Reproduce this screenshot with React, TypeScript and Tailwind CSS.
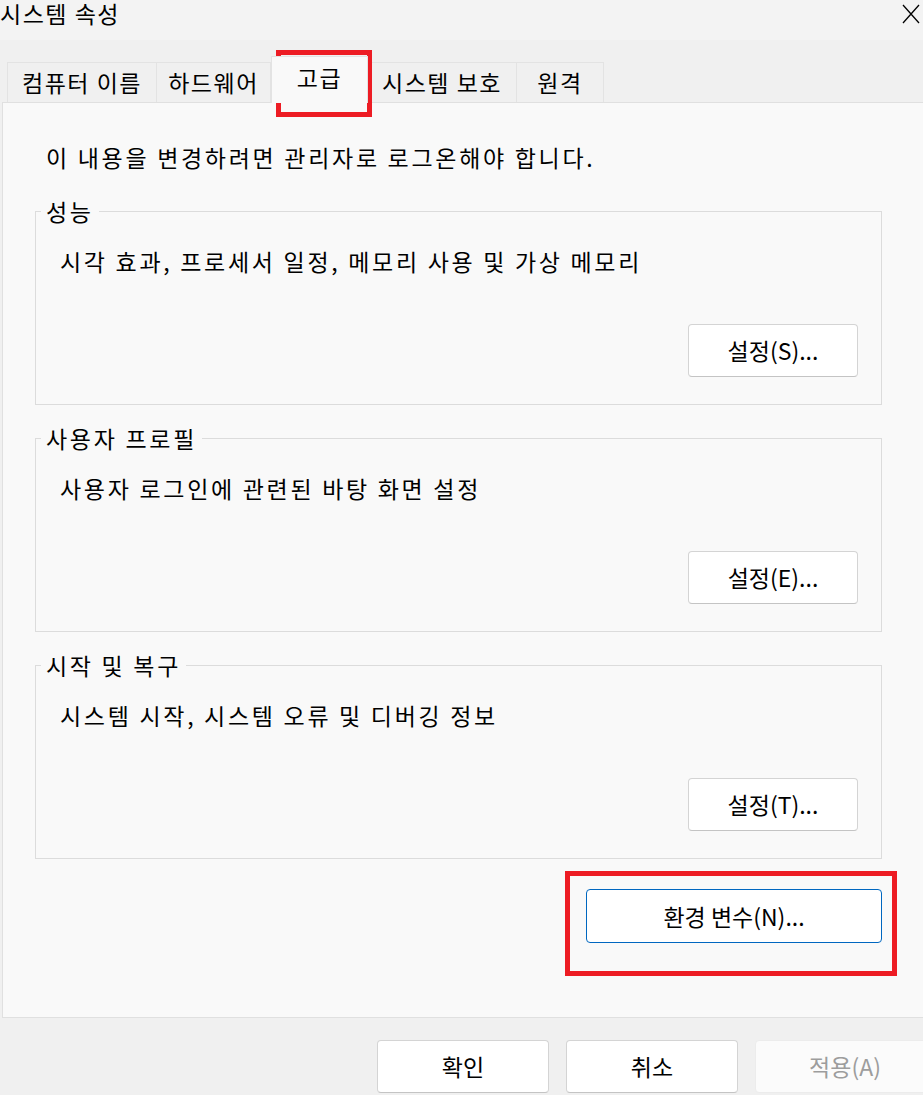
import React from "react";

const FONT = "font-['Noto_Sans_CJK_KR','Noto_Sans',sans-serif]";

const tabs = [
  { label: "컴퓨터 이름", width: "w-[150px]" },
  { label: "하드웨어", width: "w-[115px]" },
  { label: "고급", width: "w-[97px]", active: true },
  { label: "시스템 보호", width: "w-[150px]" },
  { label: "원격", width: "w-[88px]" },
];

const groups = [
  { title: "성능", text: "시각 효과, 프로세서 일정, 메모리 사용 및 가상 메모리", button: "설정(S)..." },
  { title: "사용자 프로필", text: "사용자 로그인에 관련된 바탕 화면 설정", button: "설정(E)..." },
  { title: "시작 및 복구", text: "시스템 시작, 시스템 오류 및 디버깅 정보", button: "설정(T)..." },
];

function WinButton({ children, className = "" }: { children: React.ReactNode; className?: string }) {
  return (
    <button
      className={`h-[53px] shrink-0 rounded-[4px] border border-[#d4d4d4] border-b-[#c4c4c4] bg-white text-[23px] tracking-normal text-black ${className}`}
    >
      {children}
    </button>
  );
}

function Group({ title, text, button, className = "" }: { title: string; text: string; button: string; className?: string }) {
  return (
    <fieldset className={`w-[847px] border border-[#dcdcdc] pb-[27px] ${className}`}>
      <legend className="ml-[5px] px-[5px] leading-[30px]">{title}</legend>
      <p className="mt-[20px] pl-[24px] leading-[30px]">{text}</p>
      <div className="mt-[48px] flex justify-end pr-[23px]">
        <WinButton className="w-[170px]">{button}</WinButton>
      </div>
    </fieldset>
  );
}

export default function App() {
  return (
    <div className={`relative h-[1095px] w-[923px] overflow-hidden bg-[#f0f0f0] text-[23px] tracking-[2.7px] text-black ${FONT}`}>
      {/* title bar */}
      <div className="flex h-[40px] items-start justify-between bg-[#f3f3f3]">
        <span className="leading-[26px] tracking-[1.5px]">시스템 속성</span>
        <svg width="18" height="20" viewBox="0 0 18 20" className="mr-[3px] mt-[4px]">
          <path d="M1 1 L17 19 M17 1 L1 19" stroke="#000" strokeWidth="1.3" fill="none" />
        </svg>
      </div>

      {/* tabs */}
      <div className="flex h-[62px] items-end pl-[7px] tracking-[1.5px]">
        {tabs.map((t) =>
          t.active ? (
            <div
              key={t.label}
              className={`relative z-10 -mb-[1px] flex h-[47px] shrink-0 items-center justify-center border-x border-t border-[#e3e3e3] bg-[#f9f9f9] pb-[6px] ${t.width}`}
            >
              {t.label}
            </div>
          ) : (
            <div
              key={t.label}
              className={`-ml-[1px] flex h-[40px] shrink-0 items-center justify-center border-x border-t border-[#e3e3e3] first:ml-0 ${t.width}`}
            >
              {t.label}
            </div>
          )
        )}
      </div>

      {/* panel */}
      <div className="ml-[2px] h-[916px] w-[940px] border border-[#e0e0e0] bg-[#f9f9f9] pl-[32px]">
        <p className="pl-[11px] pt-[39px] leading-[30px]">이 내용을 변경하려면 관리자로 로그온해야 합니다.</p>
        <Group {...groups[0]} className="mt-[24px]" />
        <Group {...groups[1]} className="mt-[18px]" />
        <Group {...groups[2]} className="mt-[18px]" />
        <div className="mt-[30px] flex w-[847px] justify-end">
          <button className="h-[54px] w-[296px] rounded-[4px] border border-[#0067c0] bg-white text-[23px] tracking-normal">
            환경 변수(N)...
          </button>
        </div>
      </div>

      {/* bottom buttons */}
      <div className="flex gap-[17px] pl-[377px] pt-[22px]">
        <WinButton className="w-[172px]">확인</WinButton>
        <WinButton className="w-[172px]">취소</WinButton>
        <button className="h-[53px] w-[180px] shrink-0 rounded-[4px] border border-[#ececec] bg-[#fbfbfb] text-[23px] tracking-normal text-[#9d9d9d]">
          적용(A)
        </button>
      </div>

      {/* red highlight boxes */}
      <div className="pointer-events-none absolute left-[276px] top-[50px] h-[67px] w-[96px] border-[5px] border-[#ed1c24]" />
      <div className="pointer-events-none absolute left-[565px] top-[871px] h-[105px] w-[332px] border-[5px] border-[#ed1c24]" />
    </div>
  );
}
